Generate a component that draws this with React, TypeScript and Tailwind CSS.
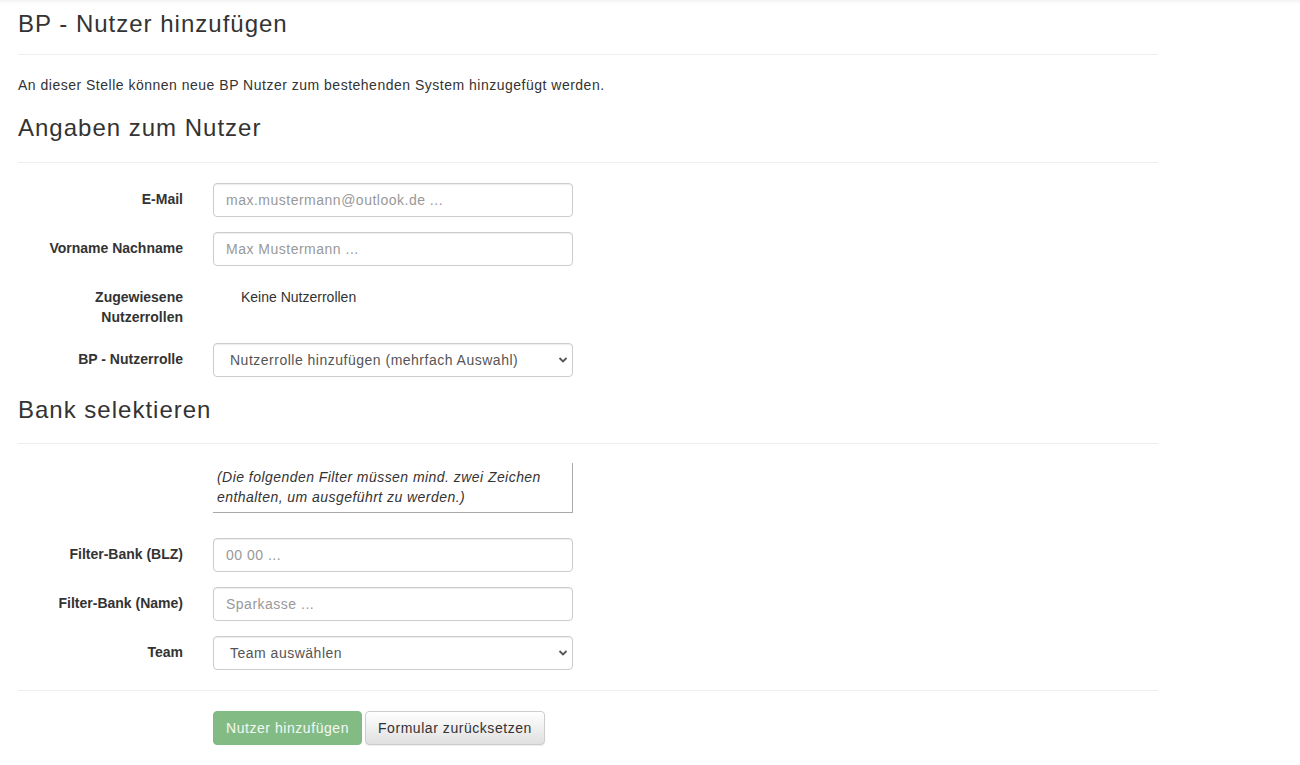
import React from "react";

const font = { fontFamily: '"Liberation Sans", Arial, sans-serif' };

function Label({ children }: { children: React.ReactNode }) {
  return (
    <div className="w-[165px] shrink-0 pt-[6px] text-right text-[14px] font-bold leading-[20px] text-[#333] tracking-[0px]">
      {children}
    </div>
  );
}

function TextInput({ placeholder }: { placeholder: string }) {
  return (
    <input
      type="text"
      placeholder={placeholder}
      className="h-[34px] w-[360px] rounded-[4px] border border-[#ccc] bg-white px-3 text-[14px] text-[#555] tracking-[0.5px] shadow-[inset_0_1px_1px_rgba(0,0,0,0.075)] outline-none placeholder:text-[#999]"
    />
  );
}

function Select({ value }: { value: string }) {
  return (
    <div className="relative w-[360px]">
      <div className="flex h-[34px] w-[360px] items-center rounded-[4px] border border-[#ccc] bg-white pl-4 text-[14px] text-[#555] tracking-[0.5px] shadow-[inset_0_1px_1px_rgba(0,0,0,0.075)]">
        {value}
      </div>
      <svg
        className="absolute right-[5px] top-[13px]"
        width="10"
        height="8"
        viewBox="0 0 10 8"
        fill="none"
      >
        <path d="M1.5 2 L5 5.5 L8.5 2" stroke="#555" strokeWidth="1.8" />
      </svg>
    </div>
  );
}

function Row({ label, children, className = "" }: { label: React.ReactNode; children: React.ReactNode; className?: string }) {
  return (
    <div className={"flex gap-[30px] " + className}>
      <Label>{label}</Label>
      {children}
    </div>
  );
}

export default function App() {
  return (
    <div className="min-h-[765px] bg-white text-[#333]" style={font}>
      <div className="h-[4px] bg-gradient-to-b from-[#f2f2f2] to-white" />
      <div className="w-[1140px] ml-[18px]">
        <h1 className="mt-[5px] text-[24px] font-normal leading-[30px] tracking-[1px] text-[#333]">
          BP - Nutzer hinzufügen
        </h1>
        <hr className="mt-[15px] border-t border-[#eee]" />
        <p className="mt-[20px] text-[14px] leading-[20px] tracking-[0.5px]">
          An dieser Stelle können neue BP Nutzer zum bestehenden System hinzugefügt werden.
        </p>
        <h2 className="mt-[18px] text-[24px] font-normal leading-[30px] tracking-[1px]">Angaben zum Nutzer</h2>
        <hr className="mt-[19px] border-t border-[#eee]" />

        <div className="mt-[20px] flex flex-col">
          <Row label="E-Mail">
            <TextInput placeholder="max.mustermann@outlook.de ..." />
          </Row>
          <Row label="Vorname Nachname" className="mt-[15px]">
            <TextInput placeholder="Max Mustermann ..." />
          </Row>
          <Row label={<>Zugewiesene<br />Nutzerrollen</>} className="mt-[15px] min-h-[47px]">
            <div className="pt-[6px] pl-[28px] text-[14px] leading-[20px] tracking-[0px]">Keine Nutzerrollen</div>
          </Row>
          <Row label="BP - Nutzerrolle" className="mt-[15px]">
            <Select value="Nutzerrolle hinzufügen (mehrfach Auswahl)" />
          </Row>
        </div>

        <h2 className="mt-[18px] text-[24px] font-normal leading-[30px] tracking-[1px]">Bank selektieren</h2>
        <hr className="mt-[18px] border-t border-[#eee]" />

        <div className="mt-[19px] flex flex-col">
          <div className="flex gap-[30px]">
            <div className="w-[165px] shrink-0" />
            <div className="w-[360px] border-b border-r border-[#aaa] px-[4px] pb-[5px] pt-[4px] text-[14px] italic leading-[20px] tracking-[0.45px]">
              (Die folgenden Filter müssen mind. zwei Zeichen enthalten, um ausgeführt zu werden.)
            </div>
          </div>
          <Row label="Filter-Bank (BLZ)" className="mt-[25px]">
            <TextInput placeholder="00 00 ..." />
          </Row>
          <Row label="Filter-Bank (Name)" className="mt-[15px]">
            <TextInput placeholder="Sparkasse ..." />
          </Row>
          <Row label="Team" className="mt-[15px]">
            <Select value="Team auswählen" />
          </Row>
        </div>

        <hr className="mt-[20px] border-t border-[#eee]" />

        <div className="mt-[20px] flex gap-[30px]">
          <div className="w-[165px] shrink-0" />
          <div className="flex gap-[3px]">
            <button className="h-[34px] rounded-[4px] border border-[#7fba82] bg-[#83bb85] px-3 text-[14px] tracking-[0.55px] text-white/90">
              Nutzer hinzufügen
            </button>
            <button className="h-[34px] rounded-[4px] border border-[#ccc] bg-gradient-to-b from-white to-[#e0e0e0] px-3 text-[14px] tracking-[0.55px] text-[#333] shadow-[inset_0_1px_0_rgba(255,255,255,0.15),0_1px_1px_rgba(0,0,0,0.075)]">
              Formular zurücksetzen
            </button>
          </div>
        </div>
      </div>
    </div>
  );
}
